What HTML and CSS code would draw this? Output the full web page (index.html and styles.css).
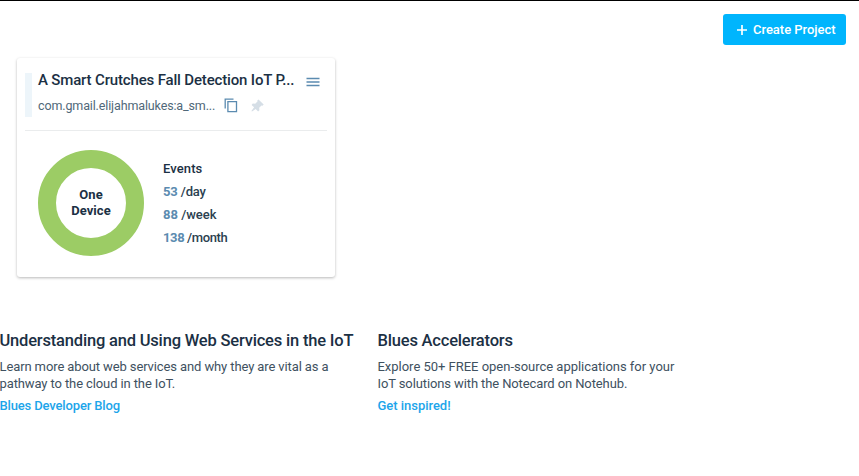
FILE: index.html
```html
<!DOCTYPE html>
<html lang="en">
<head>
<meta charset="utf-8">
<title>Projects</title>
<link rel="stylesheet" href="styles.css">
</head>
<body>
<header class="toolbar">
  <button class="create">
    <svg width="12" height="12" viewBox="0 0 12 12"><path d="M6 1v10M1 6h10" stroke="#fff" stroke-width="1.7"/></svg>
    <span class="create-label">Create Project</span>
  </button>
</header>
<main>
  <article class="card">
    <div class="card-head">
      <div class="stripe"></div>
      <div class="names">
        <div class="title-row">
          <h2><span class="title">A Smart Crutches Fall Detection IoT P...</span></h2>
          <svg class="menu" width="14" height="10" viewBox="0 0 14 10"><path d="M.5 1.500h13M.5 5h13M.5 8.500h13" stroke="#5b8bb0" stroke-width="1.300"/></svg>
        </div>
        <div class="id-row">
          <span class="uid">com.gmail.elijahmalukes:a_sm...</span>
          <svg class="copy" width="14" height="15" viewBox="0 0 14 15" fill="none" stroke="#5b8bb0" stroke-width="1.300"><path d="M1.200 10.500V1.100H9.500M3.900 3.700h8.600v10H3.900z"/></svg>
          <svg class="pin" width="13" height="13" viewBox="0 0 13 13"><path d="M7.500.4l5.200 5.200-1.200 1.200-1-.2-2.300 2.200.2 2.500-1.300 1.100L4.700 9.900 1 12.600.400 12l2.700-3.700L.6 5.900l1.200-1.300 2.400.2 2.300-2.200-.2-1z" fill="#d5dee6"/></svg>
        </div>
      </div>
    </div>
    <div class="card-body">
      <div class="donut"><div class="donut-label">One<br>Device</div></div>
      <div class="events">
        <div class="events-title">Events</div>
        <div class="day"><b>53</b> /day</div>
        <div><b>88</b> /week</div>
        <div class="month"><b>138</b> /month</div>
      </div>
    </div>
  </article>
  <div class="resources">
    <section>
      <h3>Understanding and Using Web Services in the IoT</h3>
      <p><span class="snug">Learn more about web services and why they are vital as a</span><br><span class="snug">pathway to the cloud in the IoT.</span></p>
      <a class="blog">Blues Developer Blog</a>
    </section>
    <section>
      <h3>Blues Accelerators</h3>
      <p><span class="loose">Explore 50+ FREE open-source applications for your</span><br><span class="snug">IoT solutions with the Notecard on Notehub.</span></p>
      <a>Get inspired!</a>
    </section>
  </div>
</main>
</body>
</html>
```
FILE: styles.css
```css
* { box-sizing: border-box; }
body { margin: 0; height: 476px; overflow: hidden; background: #fff; border-top: 1px solid #000; font: 13px/17px Roboto, "Liberation Sans", sans-serif; color: #1b3044; }
h2, h3, p { margin: 0; white-space: nowrap; }
svg { flex: none; display: block; }
.toolbar { display: flex; justify-content: flex-end; padding: 13px 13px 0 0; height: 57px; }
.create { display: flex; align-items: center; width: 123px; height: 31px; padding: 0 0 0 13px; gap: 5px; border: 0; border-radius: 3px; background: #00b5fd; color: #fff; font: 500 13px/17px Roboto, sans-serif; letter-spacing: -.02px; white-space: nowrap; }
.card { width: 318px; height: 219px; margin-left: 17px; border-radius: 3px; background: #fff; box-shadow: 0 1px 3px rgba(0,0,0,.28); padding: 0 8px; }
.card-head { display: flex; height: 73px; padding-top: 15px; border-bottom: 1px solid #eaeced; }
.stripe { width: 7px; height: 44px; background: #edf5fa; }
.names { margin-left: 6px; flex: 1; }
.title-row { display: flex; height: 18px; margin-top: -2px; }
h2 { width: 268px; font-weight: 500; font-size: 15px; line-height: 18px; letter-spacing: -.16px; }
.menu { margin-top: 6px; }
.id-row { display: flex; align-items: center; height: 17px; margin-top: 8px; color: #506879; }
.uid { width: 186px; font-size: 12.5px; letter-spacing: -.13px; white-space: nowrap; }
.pin { margin-left: 13px; }
.card-body { display: flex; padding: 19px 0 0 13px; }
.donut { width: 106px; height: 106px; border: 18px solid #9ccc65; border-radius: 50%; display: flex; align-items: center; justify-content: center; text-align: center; font-weight: 700; line-height: 16px; }
.donut-label { letter-spacing: .05px; }
.events { margin-left: 19px; padding-top: 7px; line-height: 23px; font-weight: 500; color: #2b3f50; white-space: nowrap; }
.events-title { color: #1b3044; letter-spacing: .1px; }
.events b { color: #5b8bb0; font-weight: 700; }
.day { letter-spacing: -.15px; }
.month { letter-spacing: -.38px; }
.resources { display: grid; grid-template-columns: 378px 320px; margin: 53px 0 0 -.5px; }
h3 { font-weight: 500; font-size: 16.5px; line-height: 22px; letter-spacing: -.19px; }
p { margin-top: 6px; color: #40515f; }
.snug { letter-spacing: -.11px; }
.loose { letter-spacing: -.02px; }
.resources a { display: block; margin-top: 5px; color: #1ca5ea; font-weight: 500; letter-spacing: -.03px; }
.resources .blog { letter-spacing: -.15px; }
```
